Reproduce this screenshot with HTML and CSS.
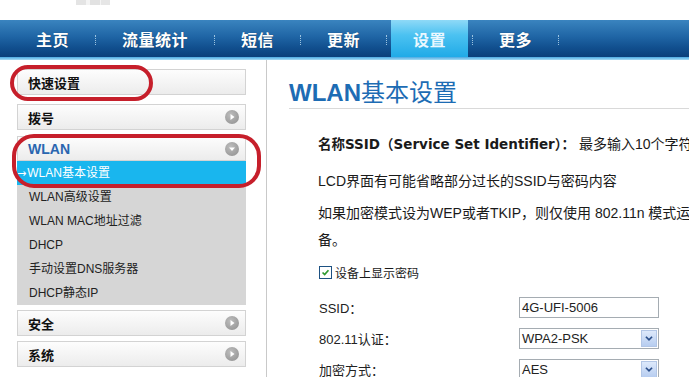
FILE: index.html
```html
<!DOCTYPE html>
<html lang="zh-CN">
<head>
<meta charset="utf-8">
<title>WLAN基本设置</title>
<link rel="stylesheet" href="styles.css">
</head>
<body>
<header class="top"><div class="logo"></div></header>
<nav class="nav">
  <a class="item">主页</a><span class="sep"></span>
  <a class="item">流量统计</a><span class="sep"></span>
  <a class="item">短信</a><span class="sep"></span>
  <a class="item">更新</a><span class="sep"></span>
  <a class="item active">设置</a><span class="sep"></span>
  <a class="item">更多</a><span class="sep"></span>
</nav>
<div class="navline"></div>
<div class="main">
  <aside class="side">
    <div class="hd hd-quick">快速设置</div>
    <div class="hd hd-dial">拨号<i class="arr"><svg viewBox="0 0 14 14"><path d="M5.5 4 L9.5 7 L5.5 10 Z" fill="#fff"/></svg></i></div>
    <div class="hd hd-wlan open">WLAN<i class="arr"><svg viewBox="0 0 14 14"><path d="M4 5.5 L10 5.5 L7 9 Z" fill="#fff"/></svg></i></div>
    <ul class="sub">
      <li class="cur"><span class="ar">→</span>WLAN基本设置</li>
      <li>WLAN高级设置</li>
      <li>WLAN MAC地址过滤</li>
      <li>DHCP</li>
      <li>手动设置DNS服务器</li>
      <li>DHCP静态IP</li>
    </ul>
    <div class="hd hd-sec">安全<i class="arr"><svg viewBox="0 0 14 14"><path d="M5.5 4 L9.5 7 L5.5 10 Z" fill="#fff"/></svg></i></div>
    <div class="hd hd-sys">系统<i class="arr"><svg viewBox="0 0 14 14"><path d="M5.5 4 L9.5 7 L5.5 10 Z" fill="#fff"/></svg></i></div>
    <div class="mark mark1"></div>
    <div class="mark mark2"></div>
  </aside>
  <section class="content">
    <h1 class="title"><b>WLAN</b>基本设置</h1>
    <div class="body">
      <p class="p1"><b>名称SSID（Service Set Identifier）：</b> 最多输入10个字符</p>
      <p class="p2">LCD界面有可能省略部分过长的SSID与密码内容</p>
      <p class="p3">如果加密模式设为WEP或者TKIP，则仅使用 802.11n 模式运行的设备将无法连接到此设<br>备。</p>
      <div class="chk"><span class="box"><svg viewBox="0 0 13 13"><path d="M3 6.5 L5.5 9 L10 3.8" fill="none" stroke="#2f9a2f" stroke-width="2"/></svg></span>设备上显示密码</div>
      <div class="row"><span class="lbl">SSID：</span><span class="field">4G-UFI-5006</span></div>
      <div class="row"><span class="lbl">802.11认证：</span><span class="field sel">WPA2-PSK<i class="dd"><svg viewBox="0 0 16 16"><path d="M4.5 6 L8 9.5 L11.5 6" fill="none" stroke="#2b4f8a" stroke-width="2"/></svg></i></span></div>
      <div class="row"><span class="lbl">加密方式：</span><span class="field sel">AES<i class="dd"><svg viewBox="0 0 16 16"><path d="M4.5 6 L8 9.5 L11.5 6" fill="none" stroke="#2b4f8a" stroke-width="2"/></svg></i></span></div>
    </div>
  </section>
</div>
</body>
</html>
```
FILE: styles.css
```css
* { box-sizing: border-box; }
html, body { margin: 0; padding: 0; }
body {
  width: 689px;
  height: 377px;
  overflow: hidden;
  background: #fff;
  font-family: "Liberation Sans", "Noto Sans CJK SC", sans-serif;
  color: #1a1a1a;
}
.top { height: 20px; position: relative; }
.logo {
  margin-left: 76px;
  width: 34px;
  height: 5px;
  background: linear-gradient(90deg, #e4e4e4 0 30%, #f4f4f4 30% 40%, #e2e2e2 40% 70%, #f4f4f4 70% 75%, #e6e6e6 75%);
}
.nav {
  height: 37px;
  display: flex;
  align-items: stretch;
  padding-left: 10px;
  background: linear-gradient(#3a84bf 0%, #1f65a5 45%, #114f8e 75%, #0b3f7b 100%);
}
.item {
  display: flex;
  align-items: center;
  padding: 0 26px;
  font-family: "Noto Sans CJK SC", sans-serif;
  font-size: 16px;
  font-weight: 700;
  color: #fff;
  letter-spacing: 0.5px;
  text-shadow: 0 0 1px rgba(0,0,0,.4);
}
.item.active {
  margin: 0 4px;
  padding: 0 22px;
  background: linear-gradient(#8fd9f7 0%, #4cc2f1 40%, #20aae7 100%);
  color: #eaf8ff;
  text-shadow: none;
}
.sep {
  align-self: center;
  width: 0;
  height: 10px;
  border-left: 1px dotted #9cc3e0;
  margin-top: 2px;
}
.navline { height: 3px; background: linear-gradient(#4aa9e2, #a9dcf5); }
.main { display: flex; }
.side {
  position: relative;
  width: 267px;
  flex: none;
  padding: 9px 20px 0 17px;
  border-right: 1px solid #c9c9c9;
  height: 317px;
}
.hd {
  display: flex;
  align-items: center;
  justify-content: space-between;
  height: 26px;
  padding: 0 6px 0 10px;
  border: 1px solid #d3d3d3;
  background: linear-gradient(#fdfdfd, #ececec);
  font-family: "Noto Sans CJK SC", sans-serif;
  font-size: 13px;
  font-weight: 700;
  color: #111;
}
.hd-dial { margin-top: 9px; }
.hd-wlan { margin-top: 6px; height: 25px; color: #2a66b0; font-family: "Liberation Sans", sans-serif; font-size: 14px; }
.hd-sec { margin-top: 5px; }
.hd-sys { margin-top: 5px; }
.arr { width: 14px; height: 14px; border-radius: 50%; background: radial-gradient(circle at 40% 35%, #bdbdbd, #8e8e8e); display: block; }
.arr svg { display: block; width: 14px; height: 14px; }
.sub {
  list-style: none;
  margin: 0;
  padding: 0;
  background: #d6d6d6;
}
.sub li {
  height: 24px;
  line-height: 24px;
  padding-left: 12px;
  font-size: 12px;
  color: #222;
  font-family: "Liberation Sans", "Noto Sans CJK SC", sans-serif;
}
.sub li.cur { background: #19b6ee; color: #fff; padding-left: 0; }
.ar { font-family: "DejaVu Sans", sans-serif; font-size: 11px; margin-right: 1px; }
.mark {
  position: absolute;
  border: 4px solid #c61f2b;
  border-radius: 18px;
}
.mark1 { left: 10px; top: 5px; width: 143px; height: 36px; }
.mark2 { left: 12px; top: 74px; width: 249px; height: 54px; border-radius: 22px; }
.content { flex: 1; padding: 16px 0 0 22px; overflow: hidden; }
.title {
  margin: 0;
  height: 33px;
  line-height: 30px;
  font-size: 24px;
  font-weight: 400;
  color: #1d6cb4;
  font-family: "Noto Sans CJK SC", sans-serif;
  border-bottom: 1px solid #d9d9d9;
  white-space: nowrap;
}
.title b { font-family: "Liberation Sans", sans-serif; font-weight: 700; }
.body { padding-left: 29px; }
.body p { margin: 0; font-size: 14px; white-space: nowrap; font-family: "Liberation Sans", "Noto Sans CJK SC", sans-serif; }
.p1 { margin-top: 25px !important; line-height: 20px; }
.p1 b { font-family: "DejaVu Sans", "Noto Sans CJK SC", sans-serif; font-weight: 700; font-size: 13.5px; }
.p2 { margin-top: 17px !important; line-height: 20px; }
.p3 { margin-top: 9px !important; line-height: 27px; }
.chk { display: flex; align-items: center; height: 20px; margin-top: 8px; font-size: 12px; font-family: "Noto Sans CJK SC", sans-serif; }
.box { width: 13px; height: 13px; border: 1px solid #1d5182; margin: 0 3px 0 1px; background: #fff; display: block; }
.box svg { display: block; width: 11px; height: 11px; }
.row { display: flex; align-items: center; height: 21px; margin-top: 10px; font-size: 13px; }
.row:nth-of-type(2) { margin-top: 15px; }
.lbl { width: 201px; padding-left: 1px; font-family: "Liberation Sans", "Noto Sans CJK SC", sans-serif; color: #222; }
.field {
  position: relative;
  width: 140px;
  height: 21px;
  border: 1px solid #a5acb2;
  padding-left: 2px;
  line-height: 19px;
  font-size: 13px;
  color: #222;
}
.dd {
  position: absolute;
  right: 1px;
  top: 1px;
  width: 16px;
  height: 17px;
  background: linear-gradient(#dde9fb, #b7cdf0);
  border: 1px solid #b2c6e6;
}
.dd svg { display: block; width: 14px; height: 15px; }
```
